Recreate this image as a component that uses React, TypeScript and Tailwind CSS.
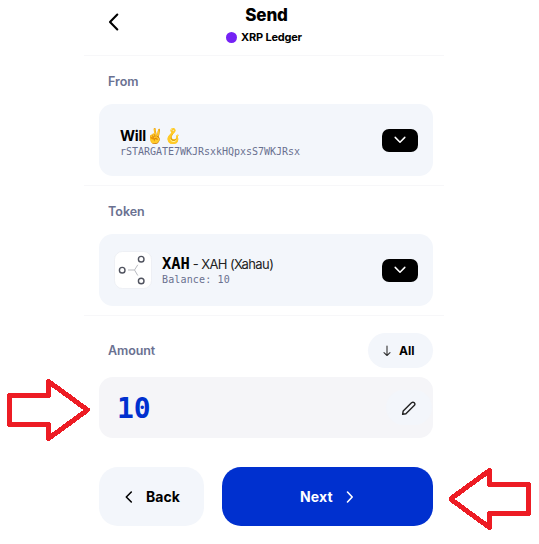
import React from "react";

const SANS = "font-['Inter','Liberation_Sans',sans-serif]";
const MONO = "font-['DejaVu_Sans_Mono','Liberation_Mono',monospace]";

function DropButton() {
  return (
    <button className="flex h-[23px] w-9 shrink-0 items-center justify-center rounded-[7px] bg-black">
      <svg width="14" height="10" viewBox="0 0 14 10" fill="none" stroke="white" strokeWidth="1.5" strokeLinecap="round" strokeLinejoin="round">
        <path d="M2.2 2.4 7 7.2 11.8 2.4" />
      </svg>
    </button>
  );
}

function TokenIcon() {
  return (
    <svg width="38" height="38" viewBox="0 0 38 38" fill="none" className="shrink-0">
      <rect x=".5" y=".5" width="37" height="37" rx="8" fill="white" stroke="#ebeef3" strokeWidth=".8" />
      <path d="M14 19h6.5l3.3-5.2M20.5 19l3.3 5.5" stroke="#b9bbc1" strokeWidth="1" />
      <g stroke="#50535f" strokeWidth="1.4">
        <circle cx="8.2" cy="19.2" r="2.8" />
        <circle cx="27.2" cy="8.2" r="2.8" />
        <circle cx="27.2" cy="30" r="2.8" />
      </g>
    </svg>
  );
}

function Arrow({ className, points }: { className: string; points: string }) {
  return (
    <svg className={className} width="90" height="70" viewBox="0 0 90 70" fill="none" shapeRendering="crispEdges">
      <polygon points={points} stroke="#ed1c24" strokeWidth="5" strokeLinejoin="round" />
    </svg>
  );
}

export default function App() {
  return (
    <div className={`relative h-[544px] w-[539px] overflow-hidden bg-white text-black ${SANS}`}>
      <main className="ml-[84px] flex h-full w-[360px] flex-col">
        <header className="grid h-14 grid-cols-[60px_1fr_60px] border-b border-[#f7f7f9]">
          <button className="flex items-start pt-3 pl-[23px]">
            <svg width="14" height="20" viewBox="0 0 14 20" fill="none" stroke="black" strokeWidth="2.1" strokeLinecap="round" strokeLinejoin="round">
              <path d="M10.3 2.5 3 10l7.3 7.5" />
            </svg>
          </button>
          <div className="flex flex-col items-center pt-[5px]">
            <h1 className="pl-[5px] text-[17px] leading-5 font-extrabold tracking-[-0.15px]">Send</h1>
            <div className="mt-[4px] flex items-center gap-1 text-[11px] leading-4 font-bold whitespace-nowrap">
              <span className="size-[11px] rounded-full bg-[#7522f5]" />
              <span className="tracking-[-0.2px]">XRP Ledger</span>
            </div>
          </div>
        </header>

        <section className="h-[130px] border-b border-[#f7f7f9] pr-[11px] pl-[15px]">
          <h2 className="pt-[18px] pl-[9px] text-[12.5px] leading-4 font-semibold text-[#6a7191]">From</h2>
          <div className="mt-[14px] flex h-[72px] items-center justify-between rounded-[14px] bg-[#f3f6fb] pr-[15px] pl-[21px]">
            <div className="pt-[5px]">
              <div className="flex h-[18px] items-center text-[14.5px] font-bold tracking-[-0.2px]">
                <span>Will</span>
                <span className="text-[14.5px] tracking-[-0.5px]">✌️🪝</span>
              </div>
              <p className={`text-[10px] leading-[14px] tracking-[-0.02px] text-[#69708f] ${MONO}`}>rSTARGATE7WKJRsxkHQpxsS7WKJRsx</p>
            </div>
            <DropButton />
          </div>
        </section>

        <section className="h-[130px] border-b border-[#f7f7f9] pr-[11px] pl-[15px]">
          <h2 className="pt-[18px] pl-[9px] text-[12.5px] leading-4 font-semibold text-[#6a7191]">Token</h2>
          <div className="mt-[14px] flex h-[72px] items-center rounded-[14px] bg-[#f3f6fb] pr-[15px] pl-[15px]">
            <TokenIcon />
            <div className="ml-[10px] flex-1 pt-[2px]">
              <div className="flex h-[18px] items-baseline whitespace-nowrap">
                <span className={`text-[15.5px] leading-[18px] font-bold tracking-[-0.1px] ${MONO}`}>XAH</span>
                <span className="ml-[3px] text-[13px] tracking-[-0.6px] text-[#222]">- XAH (Xahau)</span>
              </div>
              <p className={`text-[10px] leading-[14px] tracking-[0.15px] text-[#69708f] ${MONO}`}>Balance: 10</p>
            </div>
            <DropButton />
          </div>
        </section>

        <section className="pr-[11px] pl-[15px]">
          <div className="flex items-center justify-between pt-[17px] pl-[9px]">
            <h2 className="text-[12.5px] leading-4 font-semibold tracking-[-0.1px] text-[#6a7191]">Amount</h2>
            <button className="flex h-[35px] w-[65px] items-center rounded-full bg-[#f3f6fb] pl-[14px] text-[12px] font-bold">
              <svg width="10" height="12" viewBox="0 0 10 12" fill="none" stroke="#333" strokeWidth="1.1" strokeLinecap="round" strokeLinejoin="round">
                <path d="M5 1v9.5M2 7.7l3 2.8 3-2.8" />
              </svg>
              <span className="ml-[7px]">All</span>
            </button>
          </div>
          <div className="mt-[9px] flex h-[61px] items-center justify-between rounded-[14px] bg-[#f5f5f8] pr-px pl-[18px]">
            <span className={`pt-[2px] text-[28px] leading-8 font-bold tracking-[-0.2px] text-[#0030cf] ${MONO}`}>10</span>
            <button className="flex h-[35px] w-[46px] items-center justify-center rounded-full bg-[#f3f6fb]">
              <svg width="16" height="16" viewBox="0 0 16 16" fill="none" stroke="#222" strokeWidth="1.4" strokeLinecap="round" strokeLinejoin="round">
                <path d="M1.6 14.3 2.2 11 10.5 2.8Q12 1.6 13.3 2.8 14.6 4.1 13.2 5.4L4.9 13.7Z" />
              </svg>
            </button>
          </div>
          <div className="mt-[29px] flex gap-[18px]">
            <button className="flex h-[59px] w-[105px] items-center rounded-[19px] bg-[#f3f6fb] pl-[25px] text-[14px] font-bold">
              <svg width="10" height="14" viewBox="0 0 10 14" fill="none" stroke="black" strokeWidth="1.6" strokeLinecap="round" strokeLinejoin="round">
                <path d="M7.3 2 2.3 7 7.3 12" />
              </svg>
              <span className="ml-[12px]">Back</span>
            </button>
            <button className="flex h-[59px] w-[211px] items-center rounded-[19px] bg-[#0030cf] pl-[78px] text-[14px] font-bold text-white">
              <span className="tracking-[0.15px]">Next</span>
              <svg className="ml-[12px]" width="10" height="14" viewBox="0 0 10 14" fill="none" stroke="white" strokeWidth="1.6" strokeLinecap="round" strokeLinejoin="round">
                <path d="M2.5 2 7.2 7 2.5 12" />
              </svg>
            </button>
          </div>
        </section>
      </main>
      <Arrow className="absolute top-[375px] left-0" points="9.5,20.5 48.5,20.5 48.5,6.5 87.5,35 48.5,63.5 48.5,49.5 9.5,49.5" />
      <Arrow className="absolute top-[464px] left-[449px]" points="79.5,20.5 40.5,20.5 40.5,6.5 1.5,35 40.5,63.5 40.5,49.5 79.5,49.5" />
    </div>
  );
}
